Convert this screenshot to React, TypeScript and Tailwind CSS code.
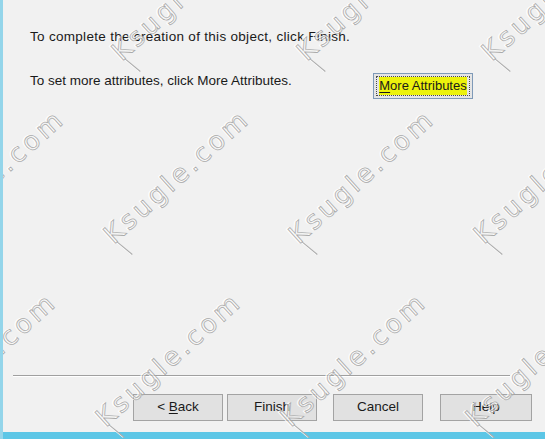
import React from "react";

const WM_ROWS = [-1, 0, 1];
const WM_COLS = [-1, 0, 1, 2];

// embossed "Ksugle.com" watermark tiled diagonally over the dialog
const Watermark = () => {
  const marks: { x: number; y: number }[] = [];
  WM_ROWS.forEach((r) =>
    WM_COLS.forEach((c) => marks.push({ x: 110 + 185 * c - 8 * r, y: 245 + 183 * r }))
  );
  const font = {
    fontFamily: "'DejaVu Sans', sans-serif",
    fontSize: 26,
    letterSpacing: 3.5,
  };
  return (
    <svg
      className="pointer-events-none absolute inset-0"
      width={545}
      height={439}
      viewBox="0 0 545 439"
    >
      {marks.map((m, i) => (
        <g key={i} transform={`translate(${m.x} ${m.y}) rotate(-42)`}>
          <line x1={5} y1={0} x2={8} y2={20} stroke="#ffffff" strokeWidth={1} transform="translate(-0.8 -0.8)" />
          <line x1={5} y1={0} x2={8} y2={20} stroke="#acacac" strokeWidth={1} />
          <text x={-0.7} y={-0.7} fill="none" stroke="#ffffff" strokeWidth={0.8} style={font}>
            Ksugle.com
          </text>
          <text x={0.5} y={0.5} fill="none" stroke="#aaaaaa" strokeWidth={0.75} style={font}>
            Ksugle.com
          </text>
        </g>
      ))}
    </svg>
  );
};

const WinButton = ({ children, className = "" }: { children: React.ReactNode; className?: string }) => (
  <button
    type="button"
    className={`h-[27px] w-[90px] border border-[#a3a3a3] bg-[#e1e1e1] text-[13.5px] text-[#1a1a1a] ${className}`}
  >
    {children}
  </button>
);

const App = () => {
  return (
    <div
      className="relative flex h-[439px] w-[545px] flex-col overflow-hidden border-l-[3px] border-[#94d5ea] bg-[#f1f1f1] text-[#1a1a1a]"
      style={{ fontFamily: "'Liberation Sans', Arial, sans-serif" }}
    >
      <div className="flex flex-1 flex-col">
        <p className="ml-[27px] mt-[28px] text-[13.5px] leading-[17px] tracking-[0.3px]">
          To complete the creation of this object, click Finish.
        </p>
        <div className="mt-[27px] flex items-start pr-[72px]">
          <p className="ml-[27px] text-[13.5px] leading-[17px]">
            To set more attributes, click More Attributes.
          </p>
          <button
            type="button"
            className="ml-auto mt-[1px] flex h-[26px] w-[100px] items-center justify-center border border-[#7f9ab8] bg-[#e5e5e5] p-[2px]"
          >
            <span className="flex h-full w-full items-center justify-center border border-dotted border-[#4a4a4a]">
              <span className="whitespace-nowrap bg-[#ecf20c] text-[13px] leading-[18px]">
                <span className="underline underline-offset-2">M</span>ore Attributes
              </span>
            </span>
          </button>
        </div>
        <div className="mt-auto ml-[10px] mr-[35px] h-px bg-[#a0a0a0] shadow-[0_1px_0_#ffffff]" />
        <div className="mt-[18px] mb-[11px] flex pl-[130px]">
          <WinButton>
            &lt; <span className="underline underline-offset-2">B</span>ack
          </WinButton>
          <WinButton className="ml-[4px]">Finish</WinButton>
          <WinButton className="ml-[16px]">Cancel</WinButton>
          <WinButton className="ml-[17px] w-[92px]">Help</WinButton>
        </div>
      </div>
      <div className="-ml-[3px] h-[7px] w-[545px] bg-[#5cc6e6]" />
      <Watermark />
    </div>
  );
};

export default App;
